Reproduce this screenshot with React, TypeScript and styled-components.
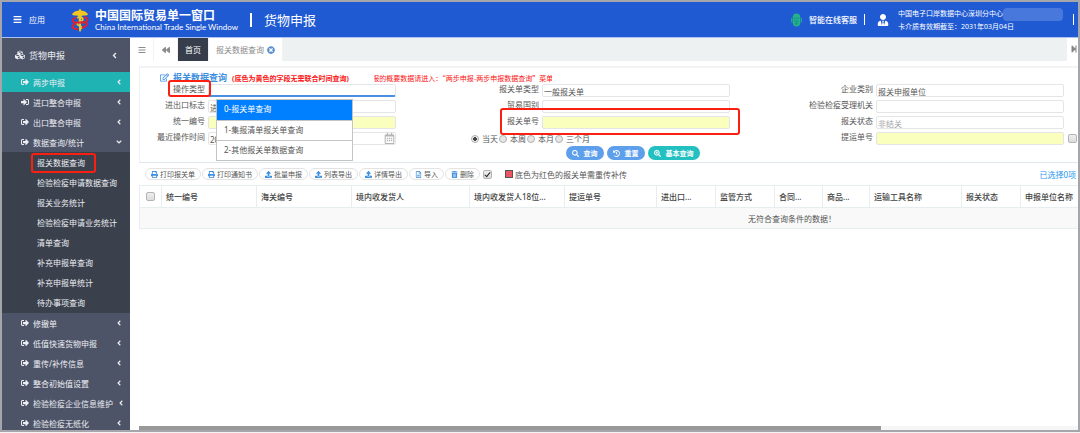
import React from "react";
import styled, { createGlobalStyle } from "styled-components";
import {
  FaBars, FaCubes, FaSignOutAlt, FaSignInAlt, FaAngleLeft, FaAngleDown, FaBackward, FaStepForward,
  FaRegEdit, FaPrint, FaUpload, FaRegFileWord, FaTrashAlt, FaSearch, FaHistory, FaSearchPlus,
  FaTimesCircle, FaUserTie, FaRegCalendarAlt,
} from "react-icons/fa";

const Global = createGlobalStyle`
  *, *::before, *::after { box-sizing: border-box; }
  body { margin: 0; background: #f4f4f4; }
  body, button, input { font-family: "Noto Sans", "Noto Sans CJK SC", sans-serif; }
  h1, h2, ul, p, fieldset { margin: 0; padding: 0; border: 0; font-weight: inherit; }
  ul { list-style: none; }
  a { color: inherit; text-decoration: none; }
  button { border: 0; padding: 0; background: none; color: inherit; font-size: inherit; cursor: pointer; }
`;

const Frame = styled.div`
  display: flex;
  flex-direction: column;
  height: calc(100vh - 1px);
  border: 2px solid #a4a6ab;
  background: #fff;
  font-size: 8px;
  color: #555;
  overflow: hidden;
  white-space: nowrap;
`;

const Header = styled.header`
  display: flex;
  align-items: center;
  flex: none;
  height: 36px;
  padding: 0 4px 0 11px;
  background: #1f5ad2;
  border-bottom: 1px solid #a9c3f5;
  color: #fff;
`;
const AppsButton = styled.button`
  display: flex;
  align-items: center;
  gap: 7px;
  margin-right: 26px;
  svg { font-size: 9px; }
`;
const Brand = styled.div`
  margin-left: 6px;
`;
const BrandName = styled.h1`
  font-size: 12px;
  line-height: 15px;
  font-weight: 700;
`;
const BrandSub = styled.p`
  font-size: 8px;
  line-height: 9px;
  font-family: Lato, sans-serif;
`;
const Divider = styled.span<{ $tall?: boolean; $gap: number }>`
  width: ${(p) => (p.$tall ? 2 : 1)}px;
  height: ${(p) => (p.$tall ? 14 : 11)}px;
  margin: 0 ${(p) => p.$gap}px;
  background: #fff;
`;
const ModuleName = styled.h2`
  font-size: 13px;
`;
const Service = styled.a`
  display: flex;
  align-items: center;
  gap: 7px;
  margin-left: auto;
  font-weight: 500;
`;
const Account = styled.div`
  display: flex;
  align-items: center;
  gap: 9px;
  margin: 0 10px 0 5px;
  > svg { font-size: 12px; }
`;
const AccountText = styled.div`
  padding-top: 2px;
  font-size: 7px;
  line-height: 12px;
`;
const Masked = styled.span`
  display: inline-block;
  width: 60px;
  height: 13px;
  vertical-align: top;
  border-radius: 4px;
  background: #4878dc;
`;

const Body = styled.div`
  display: flex;
  flex: 1;
  min-height: 0;
`;
const Sidebar = styled.nav`
  flex: none;
  width: 128px;
  overflow: hidden;
  background: #4e5468;
  color: #eceef2;
`;
const ModuleLink = styled.a`
  display: flex;
  align-items: center;
  gap: 4px;
  height: 34px;
  padding: 0 11px 0 13px;
  font-size: 9px;
  > svg:first-child { font-size: 10px; }
  > svg:last-child { margin-left: auto; }
`;
const MenuLink = styled.a<{ $active?: boolean }>`
  display: flex;
  align-items: center;
  gap: 4px;
  height: 20px;
  padding: 0 7px 0 19px;
  background: ${(p) => (p.$active ? "#1fb3b4" : "transparent")};
  > svg { flex: none; }
  > svg:last-child { margin-left: auto; }
`;
const SubMenu = styled.ul`
  padding-bottom: 1px;
  background: #3a404c;
`;
const SubLink = styled.a`
  position: relative;
  display: block;
  padding-left: 35px;
  height: 20px;
  line-height: 21px;
`;
const Mark = styled.span<{ $box: string }>`
  position: absolute;
  inset: ${(p) => p.$box};
  z-index: 5;
  border: 2px solid #fb1f12;
  border-radius: 3px;
  pointer-events: none;
`;

const Main = styled.main`
  display: flex;
  flex-direction: column;
  flex: 1;
  min-width: 0;
`;
const Tabs = styled.div`
  display: flex;
  flex: none;
  height: 23px;
  color: #888;
`;
const TabButton = styled.button<{ $kind?: "home" | "tool" }>`
  display: flex;
  align-items: center;
  justify-content: center;
  gap: 3px;
  width: ${(p) => (p.$kind === "tool" ? "24px" : "auto")};
  padding: 0 7px;
  border-right: 1px solid #f2f2f2;
  background: ${(p) => (p.$kind === "home" ? "#373d4b" : "#fff")};
  color: ${(p) => (p.$kind === "home" ? "#fff" : "#8c8c8c")};
  svg { flex: none; }
`;
const TabFill = styled.div`
  flex: 1;
  background: #edf1f2;
`;
const TabEnd = styled.button`
  flex: none;
  width: 11px;
  overflow: hidden;
  text-align: right;
`;
const Content = styled.div`
  display: flex;
  flex-direction: column;
  flex: 1;
  min-height: 0;
  padding: 5px 0 0 9px;
`;

const Panel = styled.form`
  flex: none;
  border-top: 2px solid #f3f3f3;
  border-bottom: 1px solid #dfe9ec;
  padding-bottom: 2px;
  box-shadow: inset 1px 0 #eef1f2;
`;
const PanelHead = styled.div`
  display: flex;
  align-items: center;
  height: 16px;
  padding: 3px 0 0 21px;
  color: #fb1414;
  font-size: 7px;
`;
const PanelTitle = styled.h2`
  display: flex;
  align-items: center;
  gap: 4px;
  margin-right: 5px;
  color: #3f8fe0;
  font-size: 9px;
  font-weight: 700;
`;
const Note = styled.strong`
  font-weight: 700;
`;
const Ticker = styled.div`
  display: flex;
  justify-content: center;
  width: 178px;
  margin-left: 25px;
  overflow: hidden;
  font-family: "Noto Sans CJK SC", sans-serif;
`;
const Fields = styled.div`
  display: grid;
  grid-template-columns: 66px 1fr 142px 1fr 142px 1fr 13px;
  row-gap: 3px;
`;
const Label = styled.label`
  position: relative;
  justify-self: end;
  align-self: start;
  line-height: 10px;
  z-index: 1;
`;
const Cell = styled.div`
  position: relative;
  display: flex;
  align-items: center;
  height: 13px;
  padding: 0 1px 0 3px;
`;
const TextInput = styled.input<{ $tone?: "yellow" | "focus" }>`
  flex: 1;
  min-width: 0;
  height: 13px;
  padding: 1px 1px 0;
  border: 1px solid #e3e5e7;
  border-bottom: ${(p) => (p.$tone === "focus" ? "2px solid #4a90e2" : "1px solid #e3e5e7")};
  border-radius: 2px;
  outline: 0;
  background: ${(p) => (p.$tone === "yellow" ? "#faffbd" : "#fff")};
  color: #555;
  font-size: 8px;
  &::placeholder { color: #a5a5a5; }
`;
const CalendarButton = styled.button`
  position: absolute;
  right: 2px;
  top: 1px;
  color: #b5b5b5;
  font-size: 11px;
  line-height: 11px;
`;
const Periods = styled.fieldset`
  display: flex;
  align-items: center;
  gap: 1px;
  grid-column: 3 / 5;
  padding-left: 74px;
  height: 13px;
`;
const Period = styled.label`
  display: flex;
  align-items: center;
  gap: 3px;
`;
const Radio = styled.input`
  appearance: none;
  flex: none;
  width: 8px;
  height: 8px;
  margin: 0;
  border: 1px solid #b0b0b0;
  border-radius: 50%;
  background: #e6e6e6;
  &:checked { background: radial-gradient(circle, #444 2px, #eee 2px); }
`;
const Check = styled.input`
  appearance: none;
  display: block;
  flex: none;
  position: relative;
  width: 9px;
  height: 9px;
  margin: 0;
  border: 1px solid #b4b4b4;
  border-radius: 2px;
  background: linear-gradient(#eee, #ddd);
  &:checked::after {
    content: "";
    position: absolute;
    left: 2px;
    top: 0;
    width: 3px;
    height: 6px;
    border: solid #222;
    border-width: 0 1px 1px 0;
    transform: rotate(40deg);
  }
`;
const Actions = styled.div`
  display: flex;
  justify-content: center;
  gap: 3px;
  padding: 1px 0 0 48px;
`;
const ActionButton = styled.button<{ $teal?: boolean }>`
  display: flex;
  align-items: center;
  gap: 5px;
  height: 14px;
  padding: 0 6px;
  border-radius: 7px;
  background: ${(p) => (p.$teal ? "#23c0c2" : "#5e9fec")};
  color: #fff;
  font-size: 7px;
  font-weight: 700;
`;

const Dropdown = styled.ul`
  position: absolute;
  top: 15px;
  left: 11px;
  z-index: 4;
  width: 137px;
  border: 1px solid #c4c4c4;
  background: #fff;
`;
const Option = styled.li<{ $selected?: boolean }>`
  height: 20px;
  padding-left: 7px;
  line-height: 18px;
  background: ${(p) => (p.$selected ? "#0080ff" : "#fff")};
  color: ${(p) => (p.$selected ? "#fff" : "#555")};
  & + & { border-top: 1px solid #c4c4c4; }
`;

const Toolbar = styled.div`
  display: flex;
  align-items: center;
  flex: none;
  gap: 1px;
  height: 22px;
  padding: 0 2px 0 6px;
  > input { margin-left: 2px; }
`;
const Pill = styled.button`
  display: flex;
  align-items: center;
  gap: 2px;
  height: 12px;
  padding: 0 5px;
  border: 1px solid #e3e3e3;
  border-radius: 6px;
  font-size: 7px;
  color: #555;
  svg { color: #3f8fe0; }
`;
const Legend = styled.span`
  display: flex;
  align-items: center;
  gap: 2px;
  margin-left: 12px;
  &::before {
    content: "";
    width: 8px;
    height: 8px;
    border: 1px solid #555;
    background: #ed5565;
  }
`;
const Picked = styled.a`
  margin-left: auto;
  color: #1e96f0;
`;

const TableScroll = styled.div`
  flex: 1;
  overflow: hidden;
`;
const Table = styled.table`
  width: 1306px;
  table-layout: fixed;
  border-collapse: collapse;
`;
const Th = styled.th<{ $w?: number }>`
  width: ${(p) => (p.$w ? p.$w + "px" : "auto")};
  height: 22px;
  padding: 0 4px;
  border: 1px solid #e6eef0;
  color: #444;
  font-weight: 500;
  text-align: left;
`;
const CheckTh = styled(Th)`
  padding: 0 6px;
`;
const Empty = styled.td`
  height: 21px;
  padding: 0;
  border: 1px solid #e6eef0;
  background: #f9f9f9;
  text-align: center;
`;
const ScrollTrack = styled.div`
  flex: none;
  height: 4px;
  background: #f6f6f6;
`;
const ScrollThumb = styled.div`
  width: 79%;
  height: 4px;
  background: #999;
`;

const Emblem = () => (
  <svg width="18" height="24" viewBox="0 0 18 24" aria-hidden="true">
    <path d="M0.8 6.5C2.2 4 5 2.6 7.4 2.8L9 0.4L10.6 2.8C13 2.6 15.8 4 17.2 6.5L15 7.6H11.5L10.6 8.6H7.4L6.5 7.6H3Z" fill="#f4c51d" />
    <path d="M7.6 7H10.4L9.8 23.4H8.2Z" fill="#f4c51d" />
    <path d="M6 9.8C8.5 8.6 12 9.4 12 11.4S6.2 13.8 6.2 16S11 17.8 11 19.6L9 21.4" fill="none" stroke="#f4c51d" strokeWidth="1.7" />
    <path d="M4.6 9.6C0.8 11 0.6 14 4.4 14.6L12.8 14.2C16.6 14.4 17 17.4 13 19L10.8 19.8" fill="none" stroke="#e0202c" strokeWidth="1.9" />
    <path d="M13.2 9.2C17 9.6 17.6 12.4 14.6 14M4.6 15.6C0.8 16.6 0.8 19.8 3.6 20.8L7 21.4" fill="none" stroke="#e0202c" strokeWidth="1.9" />
  </svg>
);
const Robot = () => (
  <svg width="11" height="14" viewBox="0 0 11 14" aria-hidden="true">
    <path d="M5.5 0.5C8 0.5 9.3 2 9.3 4.5V9.5C9.3 12 8 13.5 5.5 13.5S1.7 12 1.7 9.5V4.5C1.7 2 3 0.5 5.5 0.5Z" fill="#22b389" />
    <path d="M0.7 5V9.5M10.3 5V9.5" stroke="#22b389" strokeWidth="1" />
    <path d="M2.5 5.2H8.5M3 8H8M4 10.7H7M5.5 8V12" stroke="#1d8a93" strokeWidth="0.9" />
  </svg>
);

const subItems = ["报关数据查询", "检验检疫申请数据查询", "报关业务统计", "检验检疫申请业务统计", "清单查询", "补充申报单查询", "补充申报单统计", "待办事项查询"];
const lowerItems = ["修撤单", "低值快速货物申报", "重传/补传信息", "整合初始值设置", "检验检疫企业信息维护", "检验检疫无纸化"];
const tools: [React.ReactNode, string][] = [
  [<FaPrint />, "打印报关单"], [<FaPrint />, "打印通知书"], [<FaUpload />, "批量申报"], [<FaUpload />, "列表导出"],
  [<FaUpload />, "详情导出"], [<FaRegFileWord />, "导入"], [<FaTrashAlt />, "删除"],
];
const columns: [string, number?][] = [
  ["统一编号", 95], ["海关编号", 95], ["境内收发货人", 118], ["境内收发货人18位...", 95], ["提运单号", 92], ["进出口...", 59],
  ["监管方式", 59], ["合同...", 48], ["商品...", 47], ["运输工具名称", 92], ["报关状态", 59], ["申报单位名称"],
];

type FieldProps = { id: string; label: string; value?: string; placeholder?: string; tone?: "yellow" | "focus"; mark?: string; children?: React.ReactNode };
const Field = ({ id, label, value, placeholder, tone, mark, children }: FieldProps) => (
  <>
    <Label htmlFor={id}>{label}{mark && <Mark $box={mark} />}</Label>
    <Cell>
      <TextInput id={id} defaultValue={value} placeholder={placeholder} $tone={tone} />
      {children}
    </Cell>
  </>
);

export default function App() {
  return (
    <Frame>
      <Global />
      <Header>
        <AppsButton><FaBars />应用</AppsButton>
        <Emblem />
        <Brand>
          <BrandName>中国国际贸易单一窗口</BrandName>
          <BrandSub>China International Trade Single Window</BrandSub>
        </Brand>
        <Divider $tall $gap={12} />
        <ModuleName>货物申报</ModuleName>
        <Service href="#"><Robot />智能在线客服</Service>
        <Divider $gap={7} />
        <Account>
          <FaUserTie />
          <AccountText>
            <div>中国电子口岸数据中心深圳分中心<Masked /></div>
            <div>卡介质有效期截至：2031年03月04日</div>
          </AccountText>
        </Account>
        <Divider $gap={0} />
      </Header>
      <Body>
        <Sidebar>
          <ModuleLink href="#"><FaCubes />货物申报<FaAngleLeft /></ModuleLink>
          <MenuLink href="#" $active><FaSignOutAlt />两步申报<FaAngleLeft /></MenuLink>
          <MenuLink href="#"><FaSignInAlt />进口整合申报<FaAngleLeft /></MenuLink>
          <MenuLink href="#"><FaSignOutAlt />出口整合申报<FaAngleLeft /></MenuLink>
          <MenuLink href="#"><FaSignOutAlt />数据查询/统计<FaAngleDown /></MenuLink>
          <SubMenu>
            {subItems.map((t, i) => (
              <li key={t}><SubLink href="#">{t}{i === 0 && <Mark $box="1px 34px -1px 29px" />}</SubLink></li>
            ))}
          </SubMenu>
          {lowerItems.map((t) => (
            <MenuLink href="#" key={t}><FaSignOutAlt />{t}<FaAngleLeft /></MenuLink>
          ))}
        </Sidebar>
        <Main>
          <Tabs>
            <TabButton $kind="tool" aria-label="菜单"><FaBars /></TabButton>
            <TabButton $kind="tool" aria-label="向左"><FaBackward /></TabButton>
            <TabButton $kind="home">首页</TabButton>
            <TabButton>报关数据查询<FaTimesCircle color="#5a8fd0" /></TabButton>
            <TabFill />
            <TabEnd aria-label="向右"><FaStepForward /></TabEnd>
          </Tabs>
          <Content>
            <Panel>
              <PanelHead>
                <PanelTitle><FaRegEdit />报关数据查询</PanelTitle>
                <Note>(底色为黄色的字段无需联合时间查询)</Note>
                <Ticker>报的概要数据请进入：“两步申报-两步申报数据查询”菜单</Ticker>
              </PanelHead>
              <Fields>
                <Field id="op" label="操作类型" tone="focus" mark="-4px -6px -3px -5px">
                  <Dropdown role="listbox">
                    <Option role="option" $selected>0-报关单查询</Option>
                    <Option role="option">1-集报清单报关单查询</Option>
                    <Option role="option">2-其他报关单数据查询</Option>
                  </Dropdown>
                </Field>
                <Field id="kind" label="报关单类型" value="一般报关单" />
                <Field id="corp" label="企业类别" value="报关申报单位" />
                <span />
                <Field id="flag" label="进出口标志" value="进口" />
                <Field id="country" label="贸易国别" />
                <Field id="org" label="检验检疫受理机关" />
                <span />
                <Field id="uni" label="统一编号" tone="yellow" />
                <Field id="decl" label="报关单号" tone="yellow"><Mark $box="-8px -9px -6px -39px" /></Field>
                <Field id="state" label="报关状态" placeholder="非结关" />
                <span />
                <Field id="date" label="最近操作时间" value="2021">
                  <CalendarButton type="button" aria-label="选择日期"><FaRegCalendarAlt /></CalendarButton>
                </Field>
                <Periods>
                  {["当天", "本周", "本月", "三个月"].map((t, i) => (
                    <Period key={t}><Radio type="radio" name="period" defaultChecked={i === 0} />{t}</Period>
                  ))}
                </Periods>
                <Field id="bill" label="提运单号" tone="yellow" />
                <Cell><Check type="checkbox" aria-label="提运单号" /></Cell>
              </Fields>
              <Actions>
                <ActionButton type="button"><FaSearch />查询</ActionButton>
                <ActionButton type="button"><FaHistory />重置</ActionButton>
                <ActionButton type="button" $teal><FaSearchPlus />基本查询</ActionButton>
              </Actions>
            </Panel>
            <Toolbar>
              {tools.map(([icon, t]) => <Pill key={t}>{icon}{t}</Pill>)}
              <Check type="checkbox" defaultChecked aria-label="底色为红色的报关单需重传补传" />
              <Legend>底色为红色的报关单需重传补传</Legend>
              <Picked href="#">已选择0项</Picked>
            </Toolbar>
            <TableScroll>
              <Table>
                <thead>
                  <tr>
                    <CheckTh $w={22}><Check type="checkbox" aria-label="全选" /></CheckTh>
                    {columns.map(([t, w]) => <Th key={t} $w={w}>{t}</Th>)}
                  </tr>
                </thead>
                <tbody>
                  <tr><Empty colSpan={13}>无符合查询条件的数据！</Empty></tr>
                </tbody>
              </Table>
            </TableScroll>
            <ScrollTrack><ScrollThumb /></ScrollTrack>
          </Content>
        </Main>
      </Body>
    </Frame>
  );
}
